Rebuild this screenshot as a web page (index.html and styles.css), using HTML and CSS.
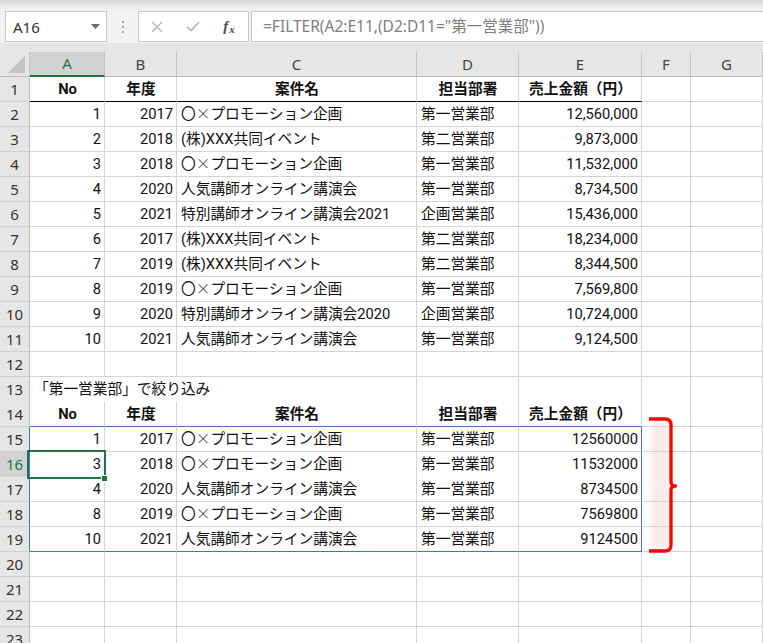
FILE: index.html
```html
<!DOCTYPE html>
<html lang="ja">
<head>
<meta charset="utf-8">
<title>FILTER</title>
<link rel="stylesheet" href="styles.css">
</head>
<body>
<div class="app">
  <div class="formula-bar">
    <div class="namebox">
      <span class="ref">A16</span>
      <svg class="caret" width="9" height="6" viewBox="0 0 9 6"><polygon points="0,0 9,0 4.5,5" fill="#6b6b6b"/></svg>
    </div>
    <div class="grip">
      <svg width="4" height="14" viewBox="0 0 4 14"><circle cx="2" cy="2" r="1.1" fill="#9a9a9a"/><circle cx="2" cy="7" r="1.1" fill="#9a9a9a"/><circle cx="2" cy="12" r="1.1" fill="#9a9a9a"/></svg>
    </div>
    <div class="fxbox">
      <span class="btn"><svg width="12" height="12" viewBox="0 0 12 12"><path d="M1 1L11 11M11 1L1 11" stroke="#b4b4b4" stroke-width="1.4" fill="none"/></svg></span>
      <span class="btn"><svg width="14" height="11" viewBox="0 0 14 11"><path d="M1 5.5L5 9.5L13 1" stroke="#b4b4b4" stroke-width="1.6" fill="none"/></svg></span>
      <span class="btn fx"><i>f</i><i class="x">x</i></span>
    </div>
    <div class="formula">=FILTER(A2:E11,(D2:D11="第一営業部"))</div>
  </div>

  <div class="sheet">
    <div class="row colhead">
      <div class="corner"><svg width="30" height="24" viewBox="0 0 30 24"><polygon points="25,4 25,21 8,21" fill="#c3c3c3"/></svg></div>
      <div class="ch sel-col">A</div><div class="ch">B</div><div class="ch">C</div><div class="ch">D</div><div class="ch">E</div><div class="ch">F</div><div class="ch">G</div><div class="ch"></div>
    </div>

    <div class="row"><div class="rh">1</div><div class="c hd bk">No</div><div class="c hd bk">年度</div><div class="c hd bk">案件名</div><div class="c hd bk">担当部署</div><div class="c hd bk">売上金額（円）</div><div class="c"></div><div class="c"></div><div class="c"></div></div>
    <div class="row"><div class="rh">2</div><div class="c n">1</div><div class="c n">2017</div><div class="c">〇<span class="mul">×</span>プロモーション企画</div><div class="c">第一営業部</div><div class="c n">12,560,000</div><div class="c"></div><div class="c"></div><div class="c"></div></div>
    <div class="row"><div class="rh">3</div><div class="c n">2</div><div class="c n">2018</div><div class="c">(株)XXX共同イベント</div><div class="c">第二営業部</div><div class="c n">9,873,000</div><div class="c"></div><div class="c"></div><div class="c"></div></div>
    <div class="row"><div class="rh">4</div><div class="c n">3</div><div class="c n">2018</div><div class="c">〇<span class="mul">×</span>プロモーション企画</div><div class="c">第一営業部</div><div class="c n">11,532,000</div><div class="c"></div><div class="c"></div><div class="c"></div></div>
    <div class="row"><div class="rh">5</div><div class="c n">4</div><div class="c n">2020</div><div class="c">人気講師オンライン講演会</div><div class="c">第一営業部</div><div class="c n">8,734,500</div><div class="c"></div><div class="c"></div><div class="c"></div></div>
    <div class="row"><div class="rh">6</div><div class="c n">5</div><div class="c n">2021</div><div class="c">特別講師オンライン講演会2021</div><div class="c">企画営業部</div><div class="c n">15,436,000</div><div class="c"></div><div class="c"></div><div class="c"></div></div>
    <div class="row"><div class="rh">7</div><div class="c n">6</div><div class="c n">2017</div><div class="c">(株)XXX共同イベント</div><div class="c">第二営業部</div><div class="c n">18,234,000</div><div class="c"></div><div class="c"></div><div class="c"></div></div>
    <div class="row"><div class="rh">8</div><div class="c n">7</div><div class="c n">2019</div><div class="c">(株)XXX共同イベント</div><div class="c">第二営業部</div><div class="c n">8,344,500</div><div class="c"></div><div class="c"></div><div class="c"></div></div>
    <div class="row"><div class="rh">9</div><div class="c n">8</div><div class="c n">2019</div><div class="c">〇<span class="mul">×</span>プロモーション企画</div><div class="c">第一営業部</div><div class="c n">7,569,800</div><div class="c"></div><div class="c"></div><div class="c"></div></div>
    <div class="row"><div class="rh">10</div><div class="c n">9</div><div class="c n">2020</div><div class="c">特別講師オンライン講演会2020</div><div class="c">企画営業部</div><div class="c n">10,724,000</div><div class="c"></div><div class="c"></div><div class="c"></div></div>
    <div class="row"><div class="rh">11</div><div class="c n">10</div><div class="c n">2021</div><div class="c">人気講師オンライン講演会</div><div class="c">第一営業部</div><div class="c n">9,124,500</div><div class="c"></div><div class="c"></div><div class="c"></div></div>
    <div class="row"><div class="rh">12</div><div class="c"></div><div class="c"></div><div class="c"></div><div class="c"></div><div class="c"></div><div class="c"></div><div class="c"></div><div class="c"></div></div>
    <div class="row"><div class="rh">13</div><div class="c span3">「第一営業部」で絞り込み</div><div class="c"></div><div class="c"></div><div class="c"></div><div class="c"></div><div class="c"></div></div>
    <div class="row"><div class="rh">14</div><div class="c hd sp-b">No</div><div class="c hd sp-b">年度</div><div class="c hd sp-b">案件名</div><div class="c hd sp-b">担当部署</div><div class="c hd sp-b">売上金額（円）</div><div class="c"></div><div class="c"></div><div class="c"></div></div>
    <div class="row"><div class="rh sp-l">15</div><div class="c n">1</div><div class="c n">2017</div><div class="c">〇<span class="mul">×</span>プロモーション企画</div><div class="c">第一営業部</div><div class="c n sp-r">12560000</div><div class="c"></div><div class="c"></div><div class="c"></div></div>
    <div class="row"><div class="rh sp-l sel-row">16</div><div class="c n sel">3<span class="handle"></span></div><div class="c n">2018</div><div class="c">〇<span class="mul">×</span>プロモーション企画</div><div class="c">第一営業部</div><div class="c n sp-r">11532000</div><div class="c"></div><div class="c"></div><div class="c"></div></div>
    <div class="row"><div class="rh sp-l">17</div><div class="c n">4</div><div class="c n">2020</div><div class="c">人気講師オンライン講演会</div><div class="c">第一営業部</div><div class="c n sp-r">8734500</div><div class="c"></div><div class="c"></div><div class="c"></div></div>
    <div class="row"><div class="rh sp-l">18</div><div class="c n">8</div><div class="c n">2019</div><div class="c">〇<span class="mul">×</span>プロモーション企画</div><div class="c">第一営業部</div><div class="c n sp-r">7569800</div><div class="c"></div><div class="c"></div><div class="c"></div></div>
    <div class="row"><div class="rh sp-l">19</div><div class="c n sp-b">10</div><div class="c n sp-b">2021</div><div class="c sp-b">人気講師オンライン講演会</div><div class="c sp-b">第一営業部</div><div class="c n sp-r sp-b">9124500</div><div class="c"></div><div class="c"></div><div class="c"></div></div>
    <div class="row"><div class="rh">20</div><div class="c"></div><div class="c"></div><div class="c"></div><div class="c"></div><div class="c"></div><div class="c"></div><div class="c"></div><div class="c"></div></div>
    <div class="row"><div class="rh">21</div><div class="c"></div><div class="c"></div><div class="c"></div><div class="c"></div><div class="c"></div><div class="c"></div><div class="c"></div><div class="c"></div></div>
    <div class="row"><div class="rh">22</div><div class="c"></div><div class="c"></div><div class="c"></div><div class="c"></div><div class="c"></div><div class="c"></div><div class="c"></div><div class="c"></div></div>
    <div class="row"><div class="rh">23</div><div class="c"></div><div class="c"></div><div class="c"></div><div class="c"></div><div class="c"></div><div class="c"></div><div class="c"></div><div class="c"></div></div>
  </div>

  <svg class="brace" width="50" height="150" viewBox="0 0 50 150">
    <defs><filter id="blur" x="-50%" y="-20%" width="200%" height="140%"><feGaussianBlur stdDeviation="2.5"/></filter></defs>
    <rect x="11" y="12" width="18" height="126" fill="#f6c6c6" opacity="0.35" filter="url(#blur)"/>
    <path d="M9,9 H25 Q31,9 31,15 V72 Q31,76 35.5,76 Q31,76 31,80 V135 Q31,141 25,141 H9" stroke="#ff0000" stroke-width="3.3" fill="none" stroke-linejoin="round"/>
  </svg>
</div>
</body>
</html>
```

FILE: styles.css
```css
html, body {
  margin: 0;
  padding: 0;
  background: #ffffff;
}

.app {
  position: relative;
  width: 763px;
  height: 643px;
  overflow: hidden;
  font-family: Roboto, "Noto Sans CJK JP", sans-serif;
}

/* formula bar */
.formula-bar {
  display: flex;
  height: 43px;
  box-sizing: border-box;
  padding: 11px 0 1px 5px;
  background: linear-gradient(#d6d6d6 0px, #ececec 6px, #f3f3f3 12px);
}

.namebox {
  width: 102px;
  height: 31px;
  box-sizing: border-box;
  background: #ffffff;
  border: 1px solid #c8c8c8;
  display: flex;
  align-items: center;
  justify-content: space-between;
  padding: 0 6px 0 7px;
}

.ref {
  font-family: "Noto Sans", sans-serif;
  font-size: 15px;
  color: #333333;
}

.caret {
  margin-top: 1px;
}

.grip {
  width: 31px;
  display: flex;
  align-items: center;
  justify-content: center;
}

.fxbox {
  width: 111px;
  height: 31px;
  box-sizing: border-box;
  background: #ffffff;
  border: 1px solid #c8c8c8;
  display: flex;
  align-items: center;
}

.btn {
  width: 36px;
  display: flex;
  align-items: center;
  justify-content: center;
}

.fx {
  font-family: "Liberation Serif", serif;
  font-size: 15px;
  font-weight: bold;
  color: #4a4a4a;
  padding-left: 0;
}

.fx .x {
  font-size: 11px;
  margin-left: 1px;
  position: relative;
  top: 2px;
}

.formula {
  flex: 1;
  height: 31px;
  box-sizing: border-box;
  margin-left: 2px;
  margin-right: -4px;
  background: #ffffff;
  border: 1px solid #c8c8c8;
  padding-left: 11px;
  font-family: "Noto Sans", "Noto Sans CJK JP", sans-serif;
  font-size: 15.5px;
  line-height: 29px;
  color: #808080;
  white-space: nowrap;
}

/* sheet */
.sheet {
  background: #e6e6e6;
  padding-top: 9px;
}

.row {
  display: grid;
  grid-template-columns: 30px 75px 72px 240px 102px 123px 49px 72px 1fr;
  height: 25px;
}

.colhead {
  background: #e6e6e6;
}

.corner {
  border-right: 1px solid #c4c4c4;
  border-bottom: 1px solid #bdbdbd;
  box-sizing: border-box;
}

.corner svg {
  display: block;
}

.ch {
  box-sizing: border-box;
  border-right: 1px solid #c4c4c4;
  border-bottom: 1px solid #bdbdbd;
  text-align: center;
  font-family: "Noto Sans", sans-serif;
  font-size: 15px;
  line-height: 24px;
  color: #444444;
}

.sel-col {
  background: #d2d2d2;
  color: #217346;
  border-bottom: 2px solid #217346;
  line-height: 23px;
}

.rh {
  box-sizing: border-box;
  background: #e6e6e6;
  border-right: 1px solid #bdbdbd;
  border-bottom: 1px solid #d0d0d0;
  text-align: center;
  font-family: "Noto Sans", sans-serif;
  font-size: 15px;
  line-height: 24px;
  color: #333333;
}

.sel-row {
  background: #d2d2d2;
  color: #217346;
}

.c {
  box-sizing: border-box;
  background: #ffffff;
  border-right: 1px solid #d4d4d4;
  border-bottom: 1px solid #d4d4d4;
  font-size: 14.7px;
  line-height: 25px;
  color: #111111;
  padding: 0 3px 0 4px;
  white-space: nowrap;
  overflow: hidden;
}

.mul {
  display: inline-block;
  width: 1em;
  line-height: 1;
  text-align: center;
  font-family: "Noto Sans CJK JP", sans-serif;
  font-weight: 300;
  color: #333333;
}

.n {
  text-align: right;
  padding: 0 3px 0 2px;
}

.hd {
  font-weight: bold;
  text-align: center;
}

.bk {
  border-bottom-color: #000000;
}

.span3 {
  grid-column: span 3;
  overflow: visible;
}

/* spill range border */
.sp-b {
  border-bottom-color: #4472c4;
}

.sp-r {
  border-right-color: #4472c4;
}

.sp-l {
  border-right-color: #4472c4;
}

/* selected cell */
.sel {
  position: relative;
  overflow: visible;
}

.sel::after {
  content: "";
  position: absolute;
  left: -3px;
  top: -2px;
  right: -2px;
  bottom: -2px;
  border: 2px solid #217346;
  z-index: 2;
}

.handle {
  position: absolute;
  right: -4px;
  bottom: -5px;
  width: 5px;
  height: 5px;
  background: #217346;
  border: 1px solid #ffffff;
  z-index: 3;
}

.brace {
  position: absolute;
  left: 640px;
  top: 410px;
}
```
